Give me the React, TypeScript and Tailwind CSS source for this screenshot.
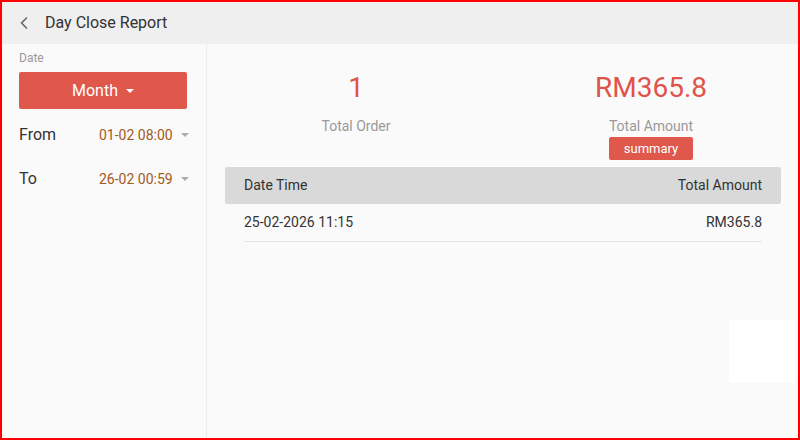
import { ChevronLeft } from "lucide-react";

function Caret({ className }: { className: string }) {
  return (
    <svg width="8" height="4" viewBox="0 0 8 4" className={className}>
      <path d="M0 0h8L4 4z" fill="currentColor" />
    </svg>
  );
}

export default function App() {
  return (
    <div
      className="flex h-[440px] w-[800px] flex-col border-2 border-[#ff0000] bg-[#fafafa] text-[#333]"
      style={{ fontFamily: "Roboto, 'Liberation Sans', sans-serif" }}
    >
      <header className="flex h-[42px] shrink-0 items-center bg-[#efefef]">
        <ChevronLeft className="ml-[12px] h-[20px] w-[20px] text-[#666]" strokeWidth={2} />
        <h1 className="ml-[11px] text-[16px] text-[#333]">Day Close Report</h1>
      </header>

      <div className="flex flex-1">
        <aside className="flex w-[205px] shrink-0 flex-col border-r border-[#ececec] px-[17px]">
          <span className="mt-[6px] text-[12px] leading-[16px] text-[#999]">Date</span>
          <button className="mt-[6px] flex h-[37px] w-[168px] items-center justify-center gap-[8px] rounded-[2px] bg-[#e0574c] text-[16px] text-white">
            Month
            <Caret className="text-white" />
          </button>
          <div className="mt-[16px] flex h-[20px] items-center whitespace-nowrap">
            <span className="w-[80px] shrink-0 text-[16px] text-[#333]">From</span>
            <span className="text-[14px] text-[#a35a22]">01-02 08:00</span>
            <Caret className="ml-[8px] shrink-0 text-[#aaa]" />
          </div>
          <div className="mt-[24px] flex h-[20px] items-center whitespace-nowrap">
            <span className="w-[80px] shrink-0 text-[16px] text-[#333]">To</span>
            <span className="text-[14px] text-[#a35a22]">26-02 00:59</span>
            <Caret className="ml-[8px] shrink-0 text-[#aaa]" />
          </div>
        </aside>

        <main className="flex flex-1 flex-col px-[18px]">
          <div className="flex pt-[26px]">
            <div className="flex w-[260px] flex-col items-center pl-[2px]">
              <span className="text-[28px] leading-[36px] text-[#e0534a]">1</span>
              <span className="mt-[10px] text-[14px] text-[#999]">Total Order</span>
            </div>
            <div className="ml-[36px] flex w-[260px] flex-col items-center">
              <span className="text-[28px] leading-[36px] text-[#e0534a]">RM365.8</span>
              <span className="mt-[10px] text-[14px] text-[#999]">Total Amount</span>
              <button className="flex h-[23px] w-[84px] items-center justify-center rounded-[2px] bg-[#e0574c] text-[13px] text-white">
                summary
              </button>
            </div>
          </div>

          <div className="mt-[7px] flex h-[37px] items-center justify-between rounded-[2px] bg-[#d9d9d9] px-[19px] text-[14px] text-[#333]">
            <span>Date Time</span>
            <span>Total Amount</span>
          </div>
          <div className="mx-[19px] flex h-[38px] items-center justify-between border-b border-[#e6e6e6] text-[14px] text-[#333]">
            <span>25-02-2026 11:15</span>
            <span>RM365.8</span>
          </div>

          <div className="mt-[78px] flex justify-end">
            <div className="mr-[-14px] h-[63px] w-[66px] bg-white" />
          </div>
        </main>
      </div>
    </div>
  );
}
